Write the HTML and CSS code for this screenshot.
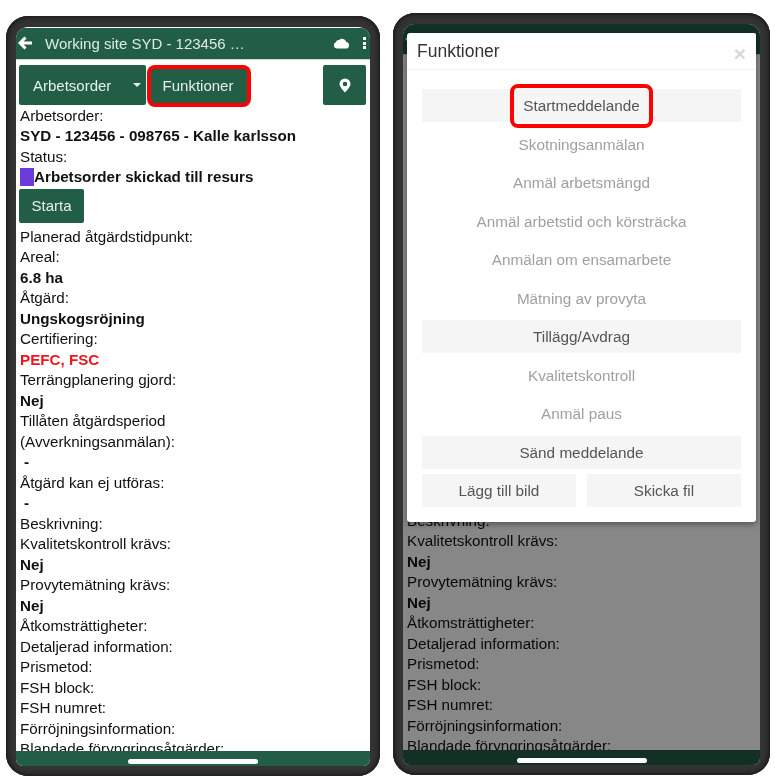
FILE: index.html
```html
<!DOCTYPE html>
<html lang="sv">
<head>
<meta charset="utf-8">
<title>Funktioner</title>
<link rel="stylesheet" href="styles.css">
</head>
<body>
<main class="stage">
  <section class="phone phone-left">
    <div class="screen">
      <header class="appbar">
        <svg class="back" viewBox="0 0 14 14"><path d="M7.500 1.500 2 7l5.500 5.500M2.500 7H14" fill="none" stroke="#fff" stroke-width="3"/></svg>
        <span class="title">Working site SYD - 123456 …</span>
        <svg class="cloud" viewBox="0 0 17 12"><path d="M3.800 11.500a3.200 3.200 0 0 1-.9-6.200 3 3 0 0 1 3.200-2.300A4.200 4.200 0 0 1 13.200 5a3.300 3.300 0 0 1 .2 6.500z" fill="#fff"/></svg>
        <span class="dots"><i></i><i></i><i></i></span>
      </header>
      <div class="content">
        <div class="toolbar">
          <button class="btn btn-order">Arbetsorder<span class="caret"></span></button>
          <button class="btn btn-func marked">Funktioner</button>
          <button class="btn btn-pin"><svg viewBox="0 0 12 15"><path fill-rule="evenodd" d="M6 .5A5.500 5.500 0 0 1 11.500 6C11.500 9 6 14.500 6 14.500S.5 9 .5 6A5.500 5.500 0 0 1 6 .5zm0 3.200a2.300 2.300 0 1 0 0 4.600 2.300 2.300 0 0 0 0-4.600z" fill="#fff"/></svg></button>
        </div>
        <p>Arbetsorder:</p>
        <p class="val">SYD - 123456 - 098765 - Kalle karlsson</p>
        <p>Status:</p>
        <p class="val"><span class="swatch"></span>Arbetsorder skickad till resurs</p>
        <button class="btn btn-start">Starta</button>
        <p>Planerad åtgärdstidpunkt:</p>
        <p>Areal:</p>
        <p class="val">6.8 ha</p>
        <p>Åtgärd:</p>
        <p class="val">Ungskogsröjning</p>
        <p>Certifiering:</p>
        <p class="val red">PEFC, FSC</p>
        <p>Terrängplanering gjord:</p>
        <p class="val">Nej</p>
        <p>Tillåten åtgärdsperiod</p>
        <p>(Avverkningsanmälan):</p>
        <p class="val dash">-</p>
        <p>Åtgärd kan ej utföras:</p>
        <p class="val dash">-</p>
        <p>Beskrivning:</p>
        <p>Kvalitetskontroll krävs:</p>
        <p class="val">Nej</p>
        <p>Provytemätning krävs:</p>
        <p class="val">Nej</p>
        <p>Åtkomsträttigheter:</p>
        <p>Detaljerad information:</p>
        <p>Prismetod:</p>
        <p>FSH block:</p>
        <p>FSH numret:</p>
        <p>Förröjningsinformation:</p>
        <p>Blandade föryngringsåtgärder:</p>
      </div>
      <footer class="bottombar"><span class="home"></span></footer>
    </div>
  </section>

  <section class="phone phone-right">
    <div class="screen">
      <header class="appbar">
        <svg class="back" viewBox="0 0 14 14"><path d="M7.500 1.500 2 7l5.500 5.500M2.500 7H14" fill="none" stroke="#fff" stroke-width="3"/></svg>
        <span class="title">Working site SYD - 123456 …</span>
        <svg class="cloud" viewBox="0 0 17 12"><path d="M3.800 11.500a3.200 3.200 0 0 1-.9-6.200 3 3 0 0 1 3.200-2.300A4.200 4.200 0 0 1 13.200 5a3.300 3.300 0 0 1 .2 6.500z" fill="#fff"/></svg>
        <span class="dots"><i></i><i></i><i></i></span>
      </header>
      <div class="content">
        <div class="toolbar">
          <button class="btn btn-order">Arbetsorder<span class="caret"></span></button>
          <button class="btn btn-func">Funktioner</button>
        </div>
        <p>Arbetsorder:</p>
        <p class="val">SYD - 123456 - 098765 - Kalle karlsson</p>
        <p>Status:</p>
        <p class="val"><span class="swatch"></span>Arbetsorder skickad till resurs</p>
        <button class="btn btn-start">Starta</button>
        <p>Planerad åtgärdstidpunkt:</p>
        <p>Areal:</p>
        <p class="val">6.8 ha</p>
        <p>Åtgärd:</p>
        <p class="val">Ungskogsröjning</p>
        <p>Certifiering:</p>
        <p class="val red">PEFC, FSC</p>
        <p>Terrängplanering gjord:</p>
        <p class="val">Nej</p>
        <p>Tillåten åtgärdsperiod</p>
        <p>(Avverkningsanmälan):</p>
        <p class="val dash">-</p>
        <p>Åtgärd kan ej utföras:</p>
        <p class="val dash">-</p>
        <p>Beskrivning:</p>
        <p>Kvalitetskontroll krävs:</p>
        <p class="val">Nej</p>
        <p>Provytemätning krävs:</p>
        <p class="val">Nej</p>
        <p>Åtkomsträttigheter:</p>
        <p>Detaljerad information:</p>
        <p>Prismetod:</p>
        <p>FSH block:</p>
        <p>FSH numret:</p>
        <p>Förröjningsinformation:</p>
        <p>Blandade föryngringsåtgärder:</p>
      </div>
      <footer class="bottombar"><span class="home"></span></footer>
      <div class="overlay">
        <div class="modal">
          <div class="modal-head">
            <h2>Funktioner</h2>
            <span class="close">×</span>
          </div>
          <div class="modal-body">
            <div class="row on"><span class="ring">Startmeddelande</span></div>
            <div class="row">Skotningsanmälan</div>
            <div class="row">Anmäl arbetsmängd</div>
            <div class="row">Anmäl arbetstid och körsträcka</div>
            <div class="row">Anmälan om ensamarbete</div>
            <div class="row">Mätning av provyta</div>
            <div class="row on">Tillägg/Avdrag</div>
            <div class="row">Kvalitetskontroll</div>
            <div class="row">Anmäl paus</div>
            <div class="row on">Sänd meddelande</div>
            <div class="pair">
              <div class="row on">Lägg till bild</div>
              <div class="row on">Skicka fil</div>
            </div>
          </div>
        </div>
      </div>
    </div>
  </section>
</main>
</body>
</html>
```

FILE: styles.css
```css
* { box-sizing: border-box; }
html, body { margin: 0; padding: 0; background: #fff; }
body { width: 775px; height: 780px; overflow: hidden; font-family: "Liberation Sans", Arial, sans-serif; }

.stage { display: flex; align-items: flex-start; padding-left: 6px; }

.phone {
  background: #333;
  border-radius: 22px;
  box-shadow: inset 0 0 0 2px #222, inset 0 0 3px 4px #2a2a2a;
  filter: blur(0.45px);
}
.phone-left { width: 374px; height: 760px; margin-top: 16px; padding: 11px 10px 10px; }
.phone-right { width: 377px; height: 762px; margin-top: 13px; margin-left: 13px; padding: 11px 10px 10px; }

.screen {
  position: relative;
  display: flex;
  flex-direction: column;
  height: 100%;
  overflow: hidden;
  background: #fff;
  border-radius: 12px 12px 7px 7px;
}

.appbar {
  flex: none;
  display: flex;
  align-items: center;
  height: 32px;
  margin-top: 1px;
  padding: 0 2px 1px;
  background: #225e45;
  color: #dfe9e4;
  border-bottom: 1px solid #cfdcd6;
}
.phone-right .appbar { height: 31px; margin-top: 0; }
.back { flex: none; width: 14px; height: 14px; margin-right: 13px; }
.title { flex: 1; font-size: 15px; white-space: nowrap; }
.cloud { flex: none; width: 17px; height: 12px; margin-right: 13px; }
.dots { flex: none; display: flex; flex-direction: column; gap: 1.5px; margin-right: 2px; }
.dots i { display: block; width: 3px; height: 3px; background: #fff; }

.content { flex: 1; min-height: 0; overflow: hidden; padding: 5px 0 0 4px; }
.phone-right .content { padding-top: 7px; }
.content p { margin: 0; font-size: 15.2px; line-height: 20.5px; color: #111; white-space: nowrap; }
.content .val { font-weight: 700; }
.content .red { color: #f0141e; }
.content .dash { padding-left: 4px; }

.swatch { display: inline-block; width: 14px; height: 18px; margin-bottom: -4px; background: #6c3bdc; }

.btn {
  display: inline-flex;
  align-items: center;
  justify-content: center;
  border: 0;
  border-radius: 2px;
  background: #225e45;
  color: #e6efea;
  font-family: inherit;
  font-size: 15px;
  padding: 0;
}

.toolbar { display: flex; gap: 2px; height: 40px; margin: 0 0 0.5px -1px; padding-right: 4px; }
.phone-right .toolbar { margin-left: 0; }
.btn-order { width: 127px; position: relative; justify-content: flex-start; padding-left: 14px; }
.caret {
  position: absolute;
  right: 5px;
  top: 18px;
  border-left: 4px solid transparent;
  border-right: 4px solid transparent;
  border-top: 4px solid #e6efea;
}
.btn-func { width: 102px; }
.btn-func.marked {
  height: 40px;
  margin-top: 1px;
  padding: 0 2px 2px 0;
  border-radius: 7px;
  box-shadow: 0 0 0 1px #f00, inset 0 0 0 3px #f00;
}
.btn-pin { width: 43px; margin-left: auto; }
.btn-pin svg { width: 12px; height: 15px; }
.btn-start { display: flex; width: 65px; height: 34px; margin: 1px 0 4px -1px; }
.phone-right .btn-start { margin-left: 0; }

.bottombar { flex: none; display: flex; justify-content: center; height: 15px; background: #225e45; }
.home { position: relative; z-index: 2; width: 130px; height: 5px; margin-top: 8px; border-radius: 3px; background: #fff; }

.overlay { position: absolute; inset: 0; padding: 9px 4px 0; background: rgba(0, 0, 0, 0.47); }
.modal {
  width: 349px;
  height: 489px;
  background: #fff;
  border-radius: 3px;
  box-shadow: 0 2px 6px rgba(0, 0, 0, 0.4);
}
.modal-head {
  display: flex;
  justify-content: space-between;
  align-items: flex-start;
  height: 37px;
  padding: 9px 10px 0;
  border-bottom: 1px solid #f2f2f2;
}
.modal-head h2 { margin: 0; font-size: 17.500px; font-weight: 400; color: #333; line-height: 18px; }
.close { font-size: 21px; font-weight: 700; line-height: 24px; color: #d8d8d8; }
.modal-body { display: flex; flex-direction: column; gap: 5.5px; padding: 19px 15px 0; }
.row {
  display: flex;
  align-items: center;
  justify-content: center;
  height: 33px;
  padding-top: 1px;
  font-size: 15.3px;
  color: #a0a0a0;
  white-space: nowrap;
}
.row.on { background: #f5f5f5; color: #555; }
.ring {
  padding: 9px 9.5px;
  border: 4px solid #f00;
  border-radius: 8px;
  line-height: 18px;
}
.pair { display: grid; grid-template-columns: 1fr 1fr; gap: 11px; }
```
